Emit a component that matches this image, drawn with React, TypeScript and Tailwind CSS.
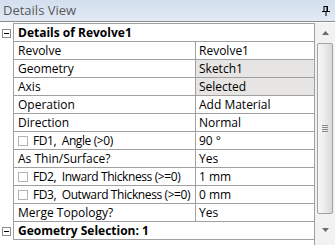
import React from 'react';

type Row = {
  label: string;
  value?: string;
  group?: boolean;
  check?: boolean;
  shaded?: boolean;
};

const rows: Row[] = [
  { label: 'Details of Revolve1', group: true },
  { label: 'Revolve', value: 'Revolve1' },
  { label: 'Geometry', value: 'Sketch1', shaded: true },
  { label: 'Axis', value: 'Selected', shaded: true },
  { label: 'Operation', value: 'Add Material' },
  { label: 'Direction', value: 'Normal' },
  { label: 'FD1,  Angle (>0)', value: '90 °', check: true },
  { label: 'As Thin/Surface?', value: 'Yes' },
  { label: 'FD2,  Inward Thickness (>=0)', value: '1 mm', check: true },
  { label: 'FD3,  Outward Thickness (>=0)', value: '0 mm', check: true },
  { label: 'Merge Topology?', value: 'Yes' },
  { label: 'Geometry Selection: 1', group: true },
];

function Expander() {
  return (
    <div className="flex h-[9px] w-[9px] items-center justify-center border border-[#8c8c8c] bg-white">
      <div className="h-px w-[5px] bg-black" />
    </div>
  );
}

function Scrollbar() {
  return (
    <div className="flex w-[20px] flex-col items-center bg-[#f2f2f2]">
      <div className="flex h-[20px] items-center justify-center">
        <svg width="7" height="4" viewBox="0 0 7 4">
          <path d="M0 4 L3.5 0 L7 4 Z" fill="#6b6b6b" />
        </svg>
      </div>
      <div className="flex h-[171px] w-[16px] items-center justify-center rounded-[2px] border border-[#a3a3a3] bg-gradient-to-r from-[#f7f7f7] via-[#ebebeb] to-[#d8d8d8]">
        <div className="flex flex-col gap-[1px]">
          <div className="h-px w-[6px] bg-[#8a8a8a]" />
          <div className="h-px w-[6px] bg-[#8a8a8a]" />
          <div className="h-px w-[6px] bg-[#8a8a8a]" />
          <div className="h-px w-[6px] bg-[#8a8a8a]" />
        </div>
      </div>
      <div className="flex flex-1 items-center justify-center">
        <svg width="7" height="4" viewBox="0 0 7 4">
          <path d="M0 0 L7 0 L3.5 4 Z" fill="#6b6b6b" />
        </svg>
      </div>
    </div>
  );
}

export default function App() {
  return (
    <div
      className="h-[245px] w-[335px] overflow-hidden bg-white text-[12px] text-black"
      style={{ fontFamily: '"Open Sans", "Noto Sans", sans-serif' }}
    >
      <header className="flex h-[22px] items-center justify-between border-b border-[#8d8d8d] bg-gradient-to-b from-[#d3dfee] to-[#e2eaf5] pl-[3px] pr-[5px]">
        <span className="text-[13px] text-[#5a5a5a]">Details View</span>
        <svg width="8" height="10" viewBox="0 0 8 10">
          <path d="M0 5.5 H8 M2 0.5 H6 M2 0 V5.5 M5 0 V5.5 M4 5.5 V10" stroke="#000" strokeWidth="1" fill="none" />
          <path d="M5.5 0.5 V5" stroke="#000" strokeWidth="1" />
        </svg>
      </header>
      <div className="flex h-[223px] pt-[1px]">
        <div className="flex-1 border-r border-[#a0a0a0]">
          <div className="ml-[13px] h-px bg-[#a0a0a0]" />
          {rows.map((row) => (
            <div key={row.label} className="flex h-[18px]">
              <div className="flex w-[13px] items-center justify-start pl-[2px]">
                {row.group && <Expander />}
              </div>
              <div className="flex flex-1 border-b border-l border-[#a0a0a0]">
                {row.group ? (
                  <div className="flex items-center pl-[4px] font-bold">{row.label}</div>
                ) : (
                  <>
                    <div className="flex w-[182px] items-center gap-[5px] overflow-hidden whitespace-pre border-r border-[#a0a0a0] pl-[4px]">
                      {row.check && (
                        <div className="h-[10px] w-[10px] shrink-0 border border-[#b4b4b4] bg-white" />
                      )}
                      <span className={row.check ? 'tracking-[-0.4px]' : ''}>{row.label}</span>
                    </div>
                    <div
                      className={`flex flex-1 items-center pl-[3px] ${row.shaded ? 'bg-[#e6e5e3]' : 'bg-white'}`}
                    >
                      {row.value}
                    </div>
                  </>
                )}
              </div>
            </div>
          ))}
        </div>
        <Scrollbar />
      </div>
    </div>
  );
}
